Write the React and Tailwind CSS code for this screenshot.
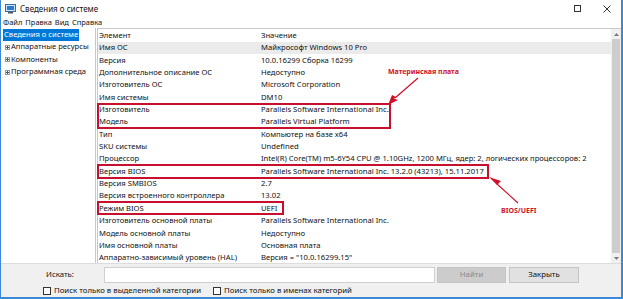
import React from "react";

const rows = [
  ["Имя ОС", "Майкрософт Windows 10 Pro"],
  ["Версия", "10.0.16299 Сборка 16299"],
  ["Дополнительное описание ОС", "Недоступно"],
  ["Изготовитель ОС", "Microsoft Corporation"],
  ["Имя системы", "DM10"],
  ["Изготовитель", "Parallels Software International Inc."],
  ["Модель", "Parallels Virtual Platform"],
  ["Тип", "Компьютер на базе x64"],
  ["SKU системы", "Undefined"],
  ["Процессор", "Intel(R) Core(TM) m5-6Y54 CPU @ 1.10GHz, 1200 МГц, ядер: 2, логических процессоров: 2"],
  ["Версия BIOS", "Parallels Software International Inc. 13.2.0 (43213), 15.11.2017"],
  ["Версия SMBIOS", "2.7"],
  ["Версия встроенного контроллера", "13.02"],
  ["Режим BIOS", "UEFI"],
  ["Изготовитель основной платы", "Parallels Software International Inc."],
  ["Модель основной платы", "Недоступно"],
  ["Имя основной платы", "Основная плата"],
  ["Аппаратно-зависимый уровень (HAL)", "Версия = \"10.0.16299.15\""],
];

function Plus() {
  return (
    <span className="inline-flex w-[5px] h-[5px] border border-[#9a9a9a] items-center justify-center mr-[1px] relative shrink-0">
      <span className="absolute w-[3px] h-[1px] bg-[#555]" />
      <span className="absolute w-[1px] h-[3px] bg-[#555]" />
    </span>
  );
}

function Checkbox({ label }) {
  return (
    <div className="flex items-center gap-[3px] whitespace-nowrap">
      <span className="w-[8px] h-[8px] border border-[#333] bg-white" />
      <span>{label}</span>
    </div>
  );
}

export default function App() {
  return (
    <div
      className="relative w-[623px] h-[299px] bg-white border-l border-r-2 border-b-2 border-[#3c87d6] text-[#111] overflow-hidden flex flex-col"
      style={{ fontFamily: '"Noto Sans", "Open Sans", sans-serif' }}
    >
      {/* Title bar */}
      <div className="h-[17px] flex items-center shrink-0">
        <svg width="11" height="10" viewBox="0 0 11 10" className="ml-[4px] mr-[4px]">
          <rect x="0.5" y="0.5" width="10" height="7" fill="#cfe3f7" stroke="#3a6ea5" />
          <rect x="2" y="2" width="7" height="4" fill="#2b78d4" />
          <rect x="3" y="8" width="5" height="1.5" fill="#555" />
        </svg>
        <span className="text-[8px] leading-none">Сведения о системе</span>
        <div className="flex-1" />
        <span className="w-[7px] h-[7px] border border-[#333] mr-[22px]" />
        <svg width="8" height="8" viewBox="0 0 8 8" className="mr-[10px]">
          <path d="M0.5 0.5 L7.5 7.5 M7.5 0.5 L0.5 7.5" stroke="#333" strokeWidth="1" />
        </svg>
      </div>
      {/* Menu */}
      <div className="h-[11px] flex items-center gap-[3px] pl-[2px] text-[7.5px] leading-none shrink-0">
        <span>Файл</span>
        <span>Правка</span>
        <span>Вид</span>
        <span>Справка</span>
      </div>
      {/* Main */}
      <div className="flex h-[235px] shrink-0">
        <div className="w-[95px] shrink-0 border-r border-[#c8c8c8] pt-[1px] pl-[2px] text-[7.6px] leading-none whitespace-nowrap overflow-hidden">
          <div className="h-[12px] flex items-center">
            <span className="bg-[#0078d7] text-white px-[1px] h-[12px] flex items-center">Сведения о системе</span>
          </div>
          {["Аппаратные ресурсы", "Компоненты", "Программная среда"].map((t) => (
            <div key={t} className="h-[12.5px] flex items-center pl-[2px]">
              <Plus />
              <span>{t}</span>
            </div>
          ))}
        </div>
        <div className="w-[1px] shrink-0" />
        <div className="flex-1 min-w-0 border-l border-t border-[#c8c8c8] flex relative">
          <div className="flex-1 min-w-0 flex flex-col text-[7.65px] leading-none overflow-hidden">
            <div className="h-[13px] flex items-center shrink-0">
              <span className="w-[163px] pl-[1px]">Элемент</span>
              <span>Значение</span>
            </div>
            {rows.map(([a, b], i) => (
              <div
                key={a}
                className={
                  "h-[12.35px] flex items-center shrink-0 whitespace-nowrap " +
                  (i === 0 ? "bg-[#ebebeb]" : "")
                }
              >
                <span className="w-[163px] pl-[1px] shrink-0">{a}</span>
                <span>{b}</span>
              </div>
            ))}
          </div>
          {/* Scrollbar */}
          <div className="w-[10px] bg-[#f0f0f0] flex flex-col items-center shrink-0">
            <div className="h-[10px] flex items-center justify-center">
              <svg width="5" height="3" viewBox="0 0 5 3">
                <path d="M0 3 L2.5 0 L5 3 Z" fill="#7a7a7a" />
              </svg>
            </div>
            <div className="w-[8px] flex-1 bg-[#cdcdcd]" />
            <div className="h-[10px] flex items-center justify-center">
              <svg width="5" height="3" viewBox="0 0 5 3">
                <path d="M0 0 L2.5 3 L5 0 Z" fill="#7a7a7a" />
              </svg>
            </div>
          </div>

          {/* Annotations */}
          <div className="absolute left-[-1px] top-[74px] w-[294px] h-[26px] border-2 border-[#c8102e]" />
          <div className="absolute left-[-1px] top-[135px] w-[392px] h-[15px] border-2 border-[#c8102e]" />
          <div className="absolute left-[-1px] top-[172px] w-[187px] h-[14px] border-2 border-[#c8102e]" />
          <span className="absolute left-[290px] top-[39px] text-[7px] font-bold text-[#d0112b] whitespace-nowrap leading-none">
            Материнская плата
          </span>
          <span className="absolute left-[403px] top-[178px] text-[7px] font-bold text-[#d0112b] whitespace-nowrap leading-none">
            BIOS/UEFI
          </span>
          <svg className="absolute left-[280px] top-[46px]" width="50" height="40" viewBox="0 0 50 40">
            <path d="M40 3 L18 22 L14 20 L10 30 L20 25 L16 23.5 Z" fill="#d0112b" />
            <path d="M40 3 L17 23" stroke="#d0112b" strokeWidth="1.2" />
          </svg>
          <svg className="absolute left-[384px] top-[143px]" width="50" height="40" viewBox="0 0 50 40">
            <path d="M36 31 L15 12" stroke="#d0112b" strokeWidth="1.2" />
            <path d="M7 5 L19 9 L15 13 Z" fill="#d0112b" />
          </svg>
        </div>
      </div>
      {/* Bottom */}
      <div className="flex-1 bg-[#f0f0f0] border-t border-[#dcdcdc] text-[7.8px] leading-none">
        <div className="flex items-center h-[21px]">
          <span className="w-[103px] pl-[45px] shrink-0">Искать:</span>
          <div className="w-[331px] h-[16px] bg-white border border-[#cfcfcf] shrink-0" />
          <div className="ml-[2px] w-[69px] h-[16px] bg-[#cccccc] border border-[#c4c4c4] flex items-center justify-center text-[#8a8a8a] shrink-0">
            Найти
          </div>
          <div className="ml-[3px] w-[70px] h-[16px] bg-[#e1e1e1] border border-[#c4c4c4] flex items-center justify-center shrink-0">
            Закрыть
          </div>
        </div>
        <div className="flex items-center h-[12px] pl-[42px] gap-[12px]">
          <Checkbox label="Поиск только в выделенной категории" />
          <Checkbox label="Поиск только в именах категорий" />
        </div>
      </div>
    </div>
  );
}
